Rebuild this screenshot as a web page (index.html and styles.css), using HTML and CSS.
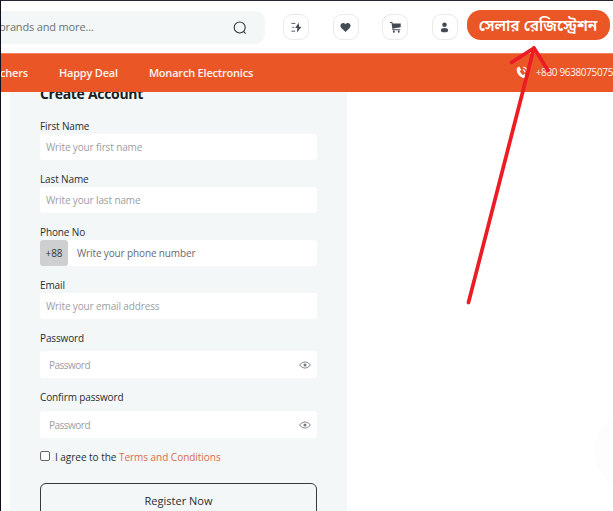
FILE: index.html
```html
<!DOCTYPE html>
<html lang="en">
<head>
<meta charset="utf-8">
<title>Create Account</title>
<link rel="stylesheet" href="styles.css">
</head>
<body>
<div class="page">
  <header class="header">
    <div class="search">
      <span class="search-text">brands and more...</span>
      <svg class="search-icon" viewBox="0 0 14 14"><circle cx="6.7" cy="6.5" r="5.5"/><path d="M10.5 10.4l2 2.3"/></svg>
    </div>
    <div class="actions">
      <span class="action"><svg viewBox="0 0 12 12"><path d="M8.4.8L4.500 6.600h2.400l-.4 4.800 5-6.300H8.800z"/><path class="thin" d="M.5 1.500h4.200M1.500 5.800h2M.5 10h4"/></svg></span>
      <span class="action"><svg viewBox="0 0 12 12"><path d="M6 10.800L1.500 6.600C-1 3.900 1.400.8 4 1.200c1 .1 1.600.6 2 1.200.4-.6 1-1.100 2-1.200 2.600-.4 5 2.700 2.500 5.400z"/></svg></span>
      <span class="action"><svg viewBox="0 0 12 12"><path d="M0 0h2.500l.5 1.500h8.700v4.300L3.500 7l.2.900h7.500v1H2.800L1.700 1H0z"/><circle cx="4.200" cy="10.500" r="1.100"/><circle cx="9.500" cy="10.500" r="1.100"/></svg></span>
      <span class="action"><svg viewBox="0 0 12 12"><circle cx="6" cy="3" r="2.500"/><ellipse cx="6" cy="8.900" rx="3.900" ry="2.400"/></svg></span>
    </div>
    <div class="seller" lang="bn"><span>সেলার রেজিস্ট্রেশন</span></div>
  </header>
  <nav class="nav">
    <span class="nav-a">chers</span>
    <span class="nav-b">Happy Deal</span>
    <span class="nav-c">Monarch Electronics</span>
    <span class="call"><svg viewBox="0 0 13 13"><path d="M1 2l2.200-1.500 2 3.200-1.300 1.200c.6 1.700 1.600 3 3 4l1.600-.8 2.500 2.700-1.700 1.400C4 12.500-.5 6.500 1 2z"/><path class="wave" d="M6.800 3.600q2 .6 2.300 2.800M7.400 1.200q3.700 1 4.100 4.800"/></svg><span class="call-number">+880 9638075075</span></span>
  </nav>
  <main class="main">
    <form class="card">
      <h1 class="title">Create Account</h1>
      <label class="label">First Name</label>
      <div class="field">Write your first name</div>
      <label class="label">Last Name</label>
      <div class="field">Write your last name</div>
      <label class="label">Phone No</label>
      <div class="field phone"><span class="prefix">+88</span><span>Write your phone number</span></div>
      <label class="label">Email</label>
      <div class="field">Write your email address</div>
      <label class="label">Password</label>
      <div class="field secret"><span class="hint">Password</span><svg class="eye" viewBox="0 0 12 8"><path d="M.5 4Q6-2.300 11.500 4 6 10.300.5 4z"/><circle cx="6" cy="4" r="1.500"/></svg></div>
      <label class="label">Confirm password</label>
      <div class="field secret"><span class="hint">Password</span><svg class="eye" viewBox="0 0 12 8"><path d="M.5 4Q6-2.300 11.500 4 6 10.300.5 4z"/><circle cx="6" cy="4" r="1.500"/></svg></div>
      <div class="agree"><span class="box"></span><span>I agree to the <a>Terms and Conditions</a></span></div>
      <div class="submit">Register Now</div>
    </form>
  </main>
  <div class="glow"></div>
  <svg class="arrow" viewBox="0 0 613 511"><path d="M468.500 302.500L534 48M511.500 62.500L534 48l14 22.500"/></svg>
</div>
</body>
</html>
```
FILE: styles.css
```css
* { box-sizing: border-box; }
body { margin: 0; background: #fff; font-family: "Open Sans", "Noto Sans", sans-serif; }
.page { position: relative; width: 613px; height: 511px; overflow: hidden; border-top: 1px solid #252735; border-left: 1px solid #10101c; }
.header { display: flex; height: 52px; padding-top: 10px; align-items: flex-start; }
.search { display: flex; justify-content: space-between; align-items: center; width: 264px; height: 33px; padding-right: 18px; background: #f3f7f8; border-radius: 0 10px 10px 0; }
.search-text { margin-left: -2px; padding-bottom: 2px; font-size: 11px; letter-spacing: -.16px; color: #6d7274; white-space: nowrap; }
.search-icon { width: 14px; height: 14px; fill: none; stroke: #30343a; stroke-width: 1.1; }
.actions { display: flex; gap: 23.6px; margin: 3px 0 0 18px; width: 174px; }
.action { display: flex; align-items: center; justify-content: center; flex: 0 0 26px; height: 26px; border: 1px solid #e9eaeb; border-radius: 9px; }
.action svg { width: 11px; height: 11px; fill: #454b54; }
.action .thin { fill: none; stroke: #454b54; stroke-width: 1; }
.seller { display: flex; align-items: center; justify-content: center; margin: -1px 0 0 10px; padding: 4px 1px 0 0; width: 143px; height: 30px; border-radius: 14px; background: #ea5626; color: #fff; font-family: "Noto Sans Bengali", "Open Sans", sans-serif; font-size: 15.5px; font-weight: 600; line-height: 26px; white-space: nowrap; }
.nav { position: relative; z-index: 1; display: flex; align-items: center; height: 39px; padding-bottom: 2px; background: #ea5626; color: #fff4ef; font-size: 11px; font-weight: 600; letter-spacing: -.2px; white-space: nowrap; border-top: 1px solid #ee845f; }
.nav-a { width: 59px; margin-left: -1px; }
.nav-b { width: 90px; }
.nav-c { width: 367px; }
.call { display: flex; align-items: center; gap: 7px; }
.call svg { width: 13px; height: 13px; fill: #fff; }
.call .wave { fill: none; stroke: #fff; stroke-width: 1.2; }
.call-number { font-size: 10px; font-weight: 500; letter-spacing: -.36px; }
.main { display: flex; height: 419px; padding-left: 9px; }
.card { width: 337px; height: 419px; padding: 0 30px; background: #f3f7f8; color: #2a2d31; font-size: 10px; letter-spacing: -.13px; }
.title { margin: -8px 0 0; height: 20px; font-size: 14px; line-height: 19px; letter-spacing: -.3px; font-weight: 700; color: #1b1e24; }
.label { display: flex; align-items: center; height: 14px; margin: 15px 0 1px; line-height: 14px; padding-bottom: 1px; }
.field { display: flex; align-items: center; height: 26px; padding-left: 6px; border-radius: 3px; background: #fff; color: #9c9da4; white-space: nowrap; margin-bottom: 12px; }
.field + .label { margin-top: 0; }
.phone { padding-left: 0; color: #686a70; }
.prefix { display: flex; align-items: center; justify-content: center; width: 28px; height: 26px; margin-right: 9px; padding-bottom: 1px; border-radius: 3px; background: #cdcfd0; color: #33363a; }
.secret { height: 27px; margin: 6px 0 12px; padding: 0 6px 0 9px; justify-content: space-between; }
.secret + .label { margin-bottom: 2px; }
.hint { letter-spacing: -.5px; }
.eye { width: 12px; height: 8px; fill: none; stroke: #777a82; stroke-width: .9; }
.eye circle { fill: #777a82; stroke: none; }
.secret + .label + .secret { margin-top: 7px; }
.agree { display: flex; align-items: center; height: 14px; gap: 5px; letter-spacing: -.03px; }
.box { width: 10px; height: 10px; margin-bottom: 2px; border: 1px solid #62656a; border-radius: 2px; background: #fff; }
.agree a { color: #dd6c4b; }
.submit { margin-top: 19px; height: 40px; border: 1px solid #363a40; border-radius: 6px; text-align: center; font-size: 11px; line-height: 34px; letter-spacing: 0; }
.glow { position: absolute; left: 593px; top: 410px; width: 80px; height: 80px; border-radius: 50%; background: #fdfdfd; }
.arrow { position: absolute; left: -1px; top: -1px; width: 613px; height: 511px; z-index: 2; fill: none; stroke: #ed1c24; stroke-width: 3.7; stroke-linecap: round; stroke-linejoin: round; }
```
